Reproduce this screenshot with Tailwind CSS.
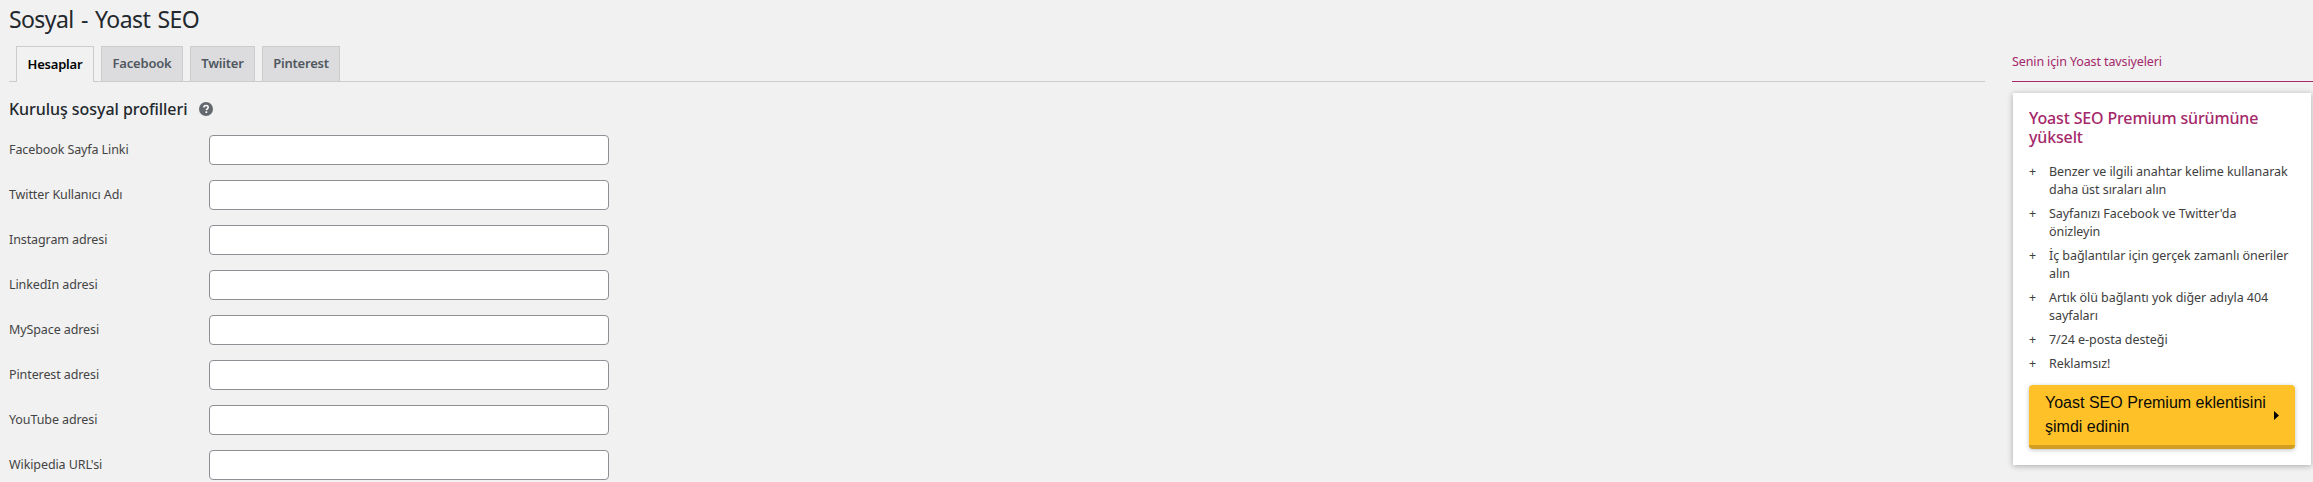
<!DOCTYPE html>
<html lang="tr">
<head>
<meta charset="UTF-8">
<title>Sosyal - Yoast SEO</title>
<script src="https://cdn.jsdelivr.net/npm/@tailwindcss/browser@4"></script>
</head>
<body class="bg-[#f1f1f1] text-[#23282d] font-['Noto_Sans',sans-serif] h-[482px] overflow-hidden flex">
    <!-- Main column -->
    <main class="w-[1985px] shrink-0 pl-[9px]">
        <h1 class="text-[23px] leading-[29px] pt-[5px] h-[46px] tracking-[-0.6px] [word-spacing:2px]">Sosyal - Yoast SEO</h1>
        <!-- Tabs -->
        <nav class="flex items-end gap-[7px] h-[36px] pl-[7px] border-b border-[#ccc] text-[13px] font-semibold tracking-[-0.2px]">
            <a class="w-[78px] h-[36px] -mb-px flex items-center justify-center bg-[#f1f1f1] border border-b-0 border-[#ccc] text-[#000]">Hesaplar</a>
            <a class="w-[82px] h-[35px] flex items-center justify-center bg-[#dcdcde] border border-b-0 border-[#ccc] text-[#50575e]">Facebook</a>
            <a class="w-[65px] h-[35px] flex items-center justify-center bg-[#dcdcde] border border-b-0 border-[#ccc] text-[#50575e]">Twiiter</a>
            <a class="w-[78px] h-[35px] flex items-center justify-center bg-[#dcdcde] border border-b-0 border-[#ccc] text-[#50575e]">Pinterest</a>
        </nav>
        <!-- Section heading -->
        <h2 class="flex items-center gap-[12px] h-[20px] mt-[17px] text-[16px] font-medium tracking-[-0.05px] text-[#23282d]">
            Kuruluş sosyal profilleri
            <svg class="w-[14px] h-[14px]" viewBox="0 0 14 14"><circle cx="7" cy="7" r="7" fill="#646970"/><path d="M4.9 5.5c0-1.2.9-2 2.2-2s2.1.8 2.1 1.8c0 1.6-1.8 1.5-1.8 2.9" fill="none" stroke="#fff" stroke-width="1.5"/><rect x="6.5" y="9.3" width="1.7" height="1.7" fill="#fff"/></svg>
        </h2>
        <!-- Profile fields -->
        <form class="mt-[16px] flex flex-col gap-[15px] text-[12.5px] tracking-[-0.1px] text-[#444]">
            <div class="flex items-center h-[30px]"><label class="w-[200px]">Facebook Sayfa Linki</label><input class="w-[400px] h-[30px] bg-white border border-[#8c8f94] rounded"></div>
            <div class="flex items-center h-[30px]"><label class="w-[200px]">Twitter Kullanıcı Adı</label><input class="w-[400px] h-[30px] bg-white border border-[#8c8f94] rounded"></div>
            <div class="flex items-center h-[30px]"><label class="w-[200px]">Instagram adresi</label><input class="w-[400px] h-[30px] bg-white border border-[#8c8f94] rounded"></div>
            <div class="flex items-center h-[30px]"><label class="w-[200px]">LinkedIn adresi</label><input class="w-[400px] h-[30px] bg-white border border-[#8c8f94] rounded"></div>
            <div class="flex items-center h-[30px]"><label class="w-[200px]">MySpace adresi</label><input class="w-[400px] h-[30px] bg-white border border-[#8c8f94] rounded"></div>
            <div class="flex items-center h-[30px]"><label class="w-[200px]">Pinterest adresi</label><input class="w-[400px] h-[30px] bg-white border border-[#8c8f94] rounded"></div>
            <div class="flex items-center h-[30px]"><label class="w-[200px]">YouTube adresi</label><input class="w-[400px] h-[30px] bg-white border border-[#8c8f94] rounded"></div>
            <div class="flex items-center h-[30px]"><label class="w-[200px]">Wikipedia URL'si</label><input class="w-[400px] h-[30px] bg-white border border-[#8c8f94] rounded"></div>
        </form>
    </main>
    <!-- Sidebar -->
    <aside class="flex-1 pl-[27px] pt-[52px]">
        <div class="h-[30px] border-b border-[#a4286a] text-[12.5px] leading-[20px] tracking-[-0.12px] text-[#a4286a]">Senin için Yoast tavsiyeleri</div>
        <div class="mt-[11px] ml-px w-[298px] h-[372px] bg-white shadow-[0_1px_6px_rgba(0,0,0,0.3)] pt-[16px] pl-[16px] pr-[16px]">
            <h3 class="text-[16px] leading-[19px] font-medium tracking-[-0.15px] text-[#a4286a]">Yoast SEO Premium sürümüne yükselt</h3>
            <ul class="mt-[16px] flex flex-col gap-[6px] text-[12.5px] leading-[18px] tracking-[-0.05px] text-[#404040]">
                <li class="flex"><span class="w-[20px] shrink-0">+</span><span class="w-[243px]">Benzer ve ilgili anahtar kelime kullanarak daha üst sıraları alın</span></li>
                <li class="flex"><span class="w-[20px] shrink-0">+</span><span class="w-[215px]">Sayfanızı Facebook ve Twitter'da önizleyin</span></li>
                <li class="flex"><span class="w-[20px] shrink-0">+</span><span class="w-[243px]">İç bağlantılar için gerçek zamanlı öneriler alın</span></li>
                <li class="flex"><span class="w-[20px] shrink-0">+</span><span class="w-[243px]">Artık ölü bağlantı yok diğer adıyla 404 sayfaları</span></li>
                <li class="flex"><span class="w-[20px] shrink-0">+</span><span class="w-[243px]">7/24 e-posta desteği</span></li>
                <li class="flex"><span class="w-[20px] shrink-0">+</span><span class="w-[243px]">Reklamsız!</span></li>
            </ul>
            <a class="mt-[12px] flex items-center justify-between w-[266px] h-[64px] pl-[16px] pr-[16px] rounded bg-[#fec228] border-b-4 border-[#d19e21] shadow-[0_1px_4px_rgba(0,0,0,0.25)] font-['Liberation_Sans',sans-serif] text-[16px] leading-[24px] text-[#0a0a0a]">
                <span class="w-[225px]">Yoast SEO Premium eklentisini şimdi edinin</span>
                <svg class="w-[5px] h-[9px]" viewBox="0 0 5 9"><path d="M0 0 L5 4.5 L0 9 Z" fill="#000"/></svg>
            </a>
        </div>
    </aside>
</body>
</html>
